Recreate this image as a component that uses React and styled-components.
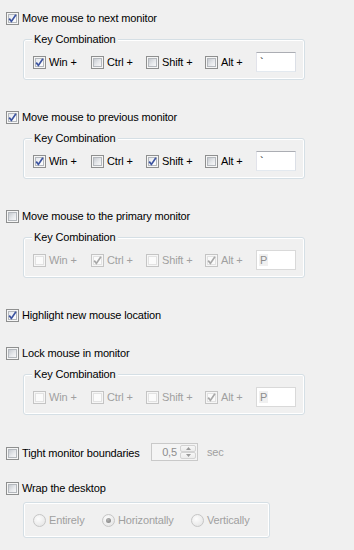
import React from 'react'
import styled, { createGlobalStyle } from 'styled-components'

const GlobalStyle = createGlobalStyle`
  * {
    margin: 0;
    padding: 0;
    box-sizing: border-box;
  }
  html, body {
    background: #f0f0f0;
  }
  body {
    font-family: "Liberation Sans", Arial, sans-serif;
    font-size: 11px;
    letter-spacing: -0.15px;
    color: #000;
  }
`

const Page = styled.div`
  width: 354px;
  height: 550px;
  padding: 11px 0 0 6px;
  overflow: hidden;
`

const Row = styled.div`
  display: flex;
  align-items: center;
  height: 15px;
  margin-top: ${p => p.$top || 0}px;
`

const Label = styled.span`
  margin-left: 3px;
  white-space: nowrap;
  line-height: 15px;
  color: ${p => (p.$disabled ? '#a0a0a0' : '#000')};
  ${p => p.$w && `width: ${p.$w}px; flex-shrink: 0;`}
`

const Box = styled.span`
  position: relative;
  flex-shrink: 0;
  width: 13px;
  height: 13px;
  border: 1px solid ${p => (p.$disabled ? '#c4c4c4' : '#8e8f8f')};
  background: #f6f6f6;
  padding: 1px;

  svg {
    position: absolute;
    left: 0;
    top: 0;
  }
`

const BoxFill = styled.span`
  display: block;
  width: 9px;
  height: 9px;
  border: 1px solid ${p => (p.$disabled ? '#e2e2e2' : '#b4b8bd')};
  background: ${p =>
    p.$disabled
      ? '#fbfbfb'
      : p.$checked
      ? 'linear-gradient(135deg, #e4e7ec 0%, #fafbfc 70%)'
      : 'linear-gradient(135deg, #c6cad0 0%, #e6e8eb 55%, #f7f7f8 100%)'};
`

const Group = styled.div`
  position: relative;
  margin: ${p => p.$top}px 0 0 17px;
  width: ${p => p.$w}px;
  height: ${p => p.$h}px;
  border: 1px solid #d5dfe5;
  border-radius: 3px;
  box-shadow: inset 0 0 0 1px #fff;
  padding: ${p => p.$pt}px 0 0 9px;
`

const Legend = styled.span`
  position: absolute;
  top: -8px;
  left: 8px;
  padding: 0 2px;
  background: #f0f0f0;
  line-height: 14px;
`

const KeyRow = styled.div`
  display: flex;
  align-items: center;
  height: 20px;
`

const Key = styled.div`
  display: flex;
  align-items: center;
  width: ${p => p.$w}px;
  flex-shrink: 0;
`

const KeyField = styled.div`
  width: 40px;
  height: 20px;
  background: #fff;
  border: 1px solid;
  border-color: ${p =>
    p.$disabled ? '#d9d9d9' : '#abadb3 #dbdfe6 #e3e9ef #e2e3ea'};
  padding: 1px 2px;
  line-height: 16px;
  color: ${p => (p.$disabled ? '#8d8d8d' : '#000')};

  span {
    padding: 0 1px;
    background: ${p => (p.$disabled ? '#f0f0f0' : 'transparent')};
  }
`

const Spin = styled.div`
  display: flex;
  width: 47px;
  height: 18px;
  margin-top: -3px;
  border: 1px solid #c9c9c9;
  background: #f4f4f4;
`

const SpinValue = styled.span`
  flex: 1;
  text-align: right;
  padding-right: 3px;
  line-height: 16px;
  color: #8d8d8d;
`

const SpinButtons = styled.div`
  display: flex;
  flex-direction: column;
  width: 17px;
  padding: 1px 1px 1px 0;
`

const SpinButton = styled.span`
  flex: 1;
  display: flex;
  align-items: center;
  justify-content: center;
  border: 1px solid #d3d3d3;
  border-radius: 2px;
  background: linear-gradient(#f7f7f7, #ececec);
`

const Unit = styled.span`
  margin-left: 9px;
  margin-top: -3px;
  color: #a0a0a0;
`

const RadioItem = styled.div`
  display: flex;
  align-items: center;
  ${p => p.$w && `width: ${p.$w}px; flex-shrink: 0;`}
`

const Radio = styled.span`
  position: relative;
  width: 13px;
  height: 13px;
  flex-shrink: 0;
  border-radius: 50%;
  border: 1px solid #c6c6c6;
  background: radial-gradient(circle at 40% 35%, #fdfdfd 0%, #ececec 60%, #e0e0e0 100%);

  &::after {
    content: '';
    display: ${p => (p.$on ? 'block' : 'none')};
    position: absolute;
    left: 3px;
    top: 3px;
    width: 5px;
    height: 5px;
    border-radius: 50%;
    background: radial-gradient(circle at 40% 35%, #b5b5b5, #7a7a7a);
  }
`

function Check({ checked, disabled }) {
  return (
    <Box $disabled={disabled}>
      <BoxFill $checked={checked} $disabled={disabled} />
      {checked && (
        <svg width="11" height="11" viewBox="0 0 11 11">
          <path
            d="M2.2 5.6 L4.4 8.4 L8.9 1.8"
            fill="none"
            stroke={disabled ? '#a8a8a8' : '#3d54a0'}
            strokeWidth="1.7"
          />
        </svg>
      )}
    </Box>
  )
}

function Option({ top, checked, children }) {
  return (
    <Row $top={top}>
      <Check checked={checked} />
      <Label>{children}</Label>
    </Row>
  )
}

const keyWidths = [58, 55, 59, 51]

function KeyGroup({ keys, value, disabled }) {
  const names = ['Win +', 'Ctrl +', 'Shift +', 'Alt +']
  return (
    <Group $top={13} $w={282} $h={41} $pt={12}>
      <Legend>Key Combination</Legend>
      <KeyRow>
        {names.map((n, i) => (
          <Key key={n} $w={keyWidths[i]}>
            <Check checked={keys[i]} disabled={disabled} />
            <Label $disabled={disabled}>{n}</Label>
          </Key>
        ))}
        <KeyField $disabled={disabled}>
          <span>{value}</span>
        </KeyField>
      </KeyRow>
    </Group>
  )
}

export default function App() {
  return (
    <Page>
      <GlobalStyle />
      <Option checked>Move mouse to next monitor</Option>
      <KeyGroup keys={[true, false, false, false]} value="`" />

      <Option top={30} checked>Move mouse to previous monitor</Option>
      <KeyGroup keys={[true, false, true, false]} value="`" />

      <Option top={30}>Move mouse to the primary monitor</Option>
      <KeyGroup keys={[false, true, false, true]} value="P" disabled />

      <Option top={30} checked>Highlight new mouse location</Option>

      <Option top={23}>Lock mouse in monitor</Option>
      <KeyGroup keys={[false, false, false, true]} value="P" disabled />

      <Row $top={31}>
        <Check />
        <Label $w={129}>Tight monitor boundaries</Label>
        <Spin>
          <SpinValue>0,5</SpinValue>
          <SpinButtons>
            <SpinButton>
              <svg width="5" height="3" viewBox="0 0 5 3">
                <path d="M0 3 L2.5 0 L5 3 Z" fill="#9a9a9a" />
              </svg>
            </SpinButton>
            <SpinButton>
              <svg width="5" height="3" viewBox="0 0 5 3">
                <path d="M0 0 L2.5 3 L5 0 Z" fill="#9a9a9a" />
              </svg>
            </SpinButton>
          </SpinButtons>
        </Spin>
        <Unit>sec</Unit>
      </Row>

      <Option top={20}>Wrap the desktop</Option>
      <Group $top={6} $w={247} $h={36} $pt={7}>
        <KeyRow>
          <RadioItem $w={69}>
            <Radio />
            <Label $disabled>Entirely</Label>
          </RadioItem>
          <RadioItem $w={89}>
            <Radio $on />
            <Label $disabled>Horizontally</Label>
          </RadioItem>
          <RadioItem>
            <Radio />
            <Label $disabled>Vertically</Label>
          </RadioItem>
        </KeyRow>
      </Group>
    </Page>
  )
}
